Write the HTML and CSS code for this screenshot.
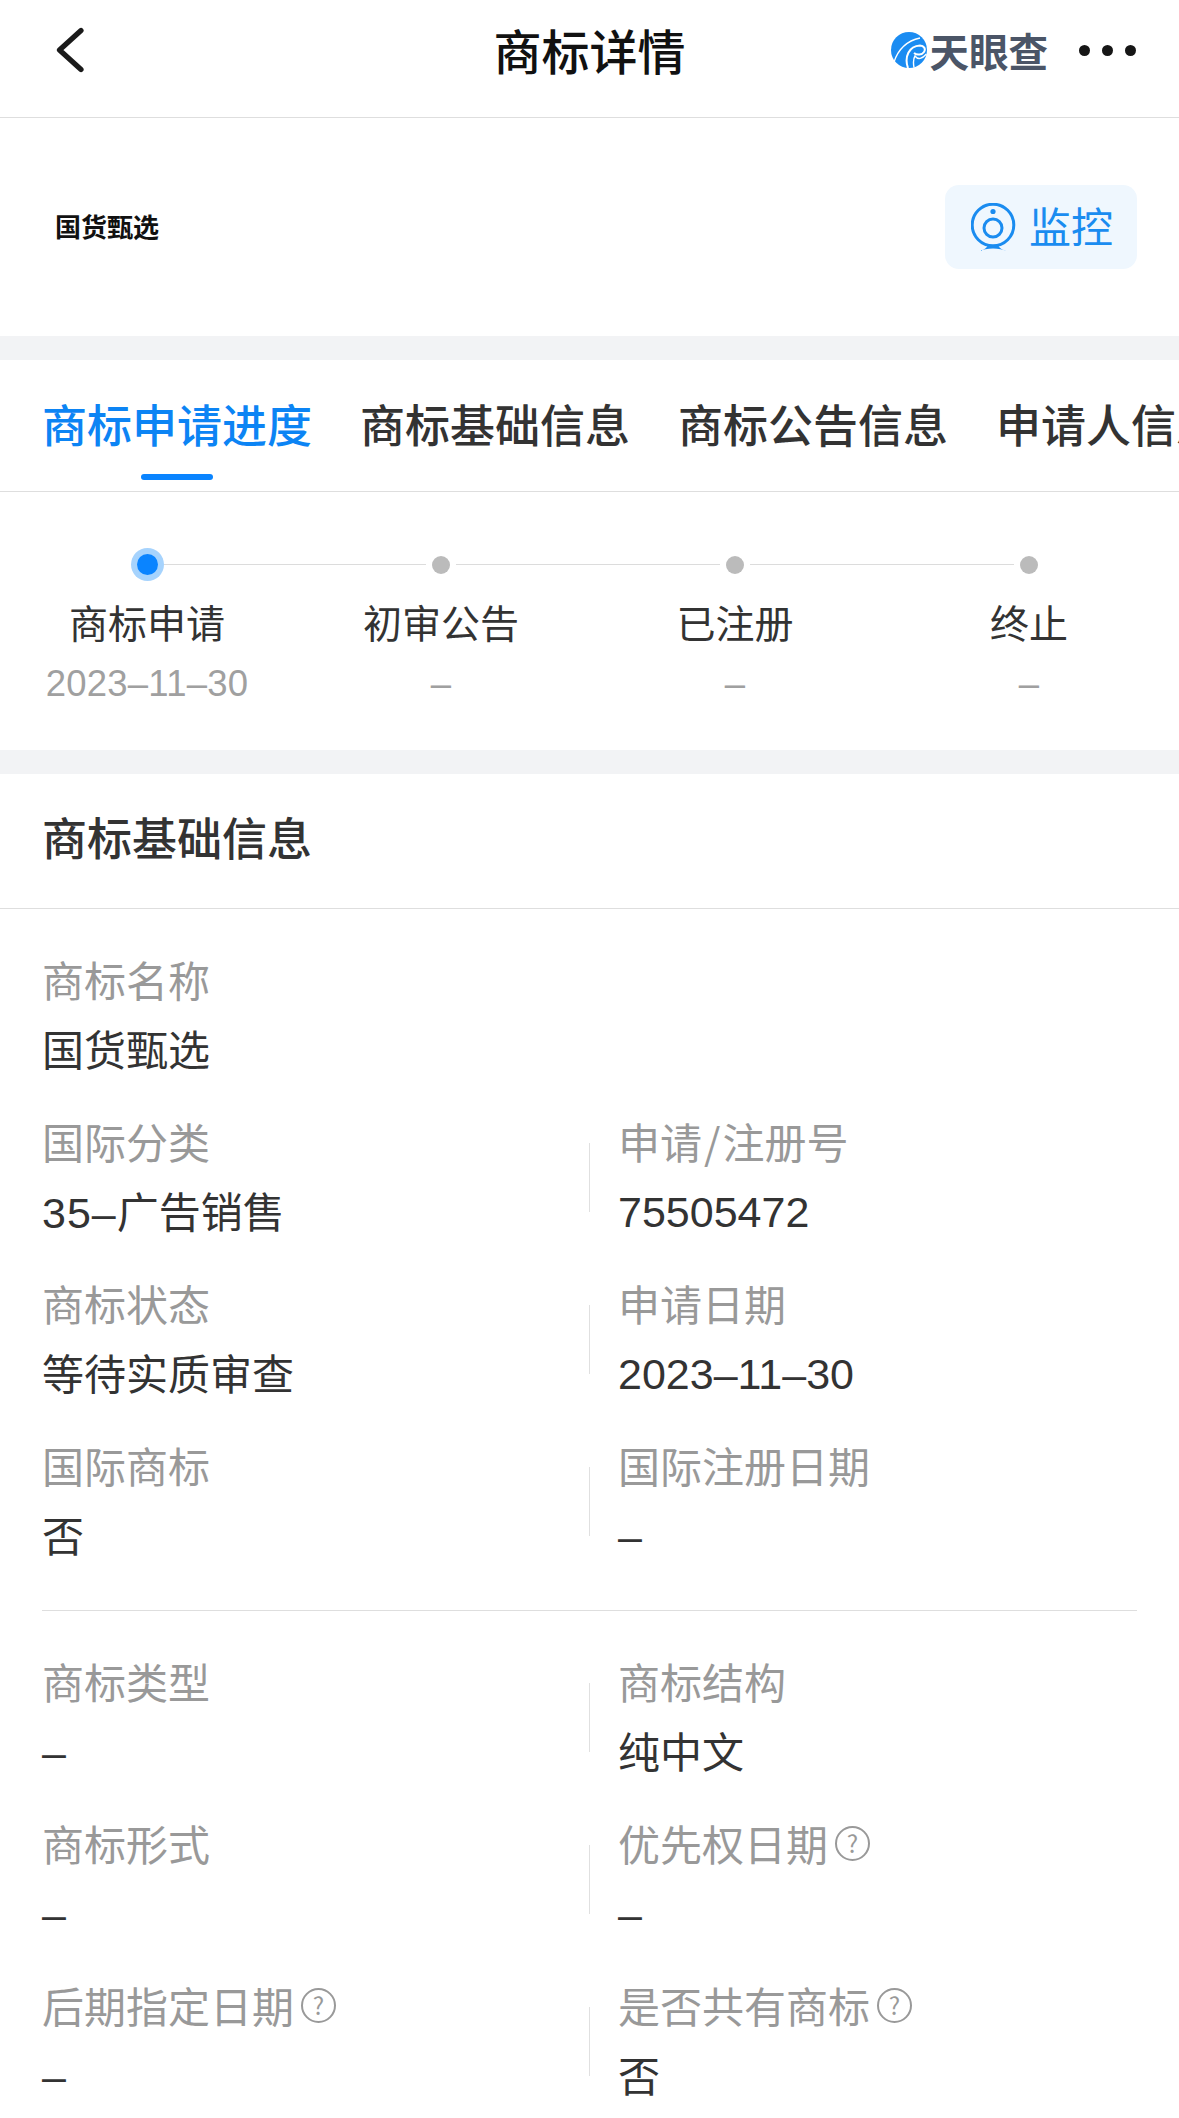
FILE: index.html
```html
<!DOCTYPE html>
<html lang="zh-CN">
  <head>
    <meta charset="UTF-8" />
    <meta name="viewport" content="width=device-width, initial-scale=1.0" />
    <title>商标详情</title>
    <link rel="stylesheet" href="styles.css">
  </head>
  <body>
    <header class="nav">
      <div class="nav-left">
        <svg class="back" width="28" height="46" viewBox="0 0 28 46"><path d="M25 3.5 L3.5 23 L25 42.5" fill="none" stroke="#1a1a1a" stroke-width="5.2" stroke-linecap="round" stroke-linejoin="round"/></svg>
      </div>
      <h1 class="nav-title">商标详情</h1>
      <div class="nav-right">
        <div class="logo">
          <svg width="36" height="36" viewBox="0 0 36 36">
            <circle cx="18" cy="18" r="18" fill="#1b8cf2"/>
            <path d="M3 30 C7 18 15 9 29 6" fill="none" stroke="#fff" stroke-width="1.3"/>
            <path d="M17 36 C13 25 18 14 29 13.5 C33 13.5 35 17 33 20 C31 23 26 23.5 23 21" fill="none" stroke="#fff" stroke-width="2"/>
            <path d="M23 35.5 C22 30 22 27 24 24 C27 28 31 27 35.5 22" fill="none" stroke="#fff" stroke-width="1.4"/>
          </svg>
          <span class="logo-text">天眼查</span>
        </div>
        <div class="more"><i></i><i></i><i></i></div>
      </div>
    </header>

    <section class="brand">
      <span class="brand-name">国货甄选</span>
      <div class="monitor">
        <svg width="45" height="48" viewBox="0 0 45 48">
          <circle cx="22" cy="22" r="20.8" fill="none" stroke="#1a8cf0" stroke-width="3"/>
          <circle cx="22" cy="25" r="9" fill="none" stroke="#1a8cf0" stroke-width="3"/>
          <circle cx="22" cy="8.5" r="2.6" fill="#1a8cf0"/>
          <path d="M8 48 C13 47 16 45 17 42 L27 42 C28 45 31 47 36 48 C29 44.5 15 44.5 8 48 Z" fill="#1a8cf0"/>
        </svg>
        <span class="monitor-text">监控</span>
      </div>
    </section>

    <div class="band"></div>

    <nav class="tabs">
      <span class="tab active">商标申请进度</span>
      <span class="tab">商标基础信息</span>
      <span class="tab">商标公告信息</span>
      <span class="tab">申请人信息</span>
    </nav>

    <section class="steps">
      <div class="step">
        <div class="track"><span class="seg none"></span><span class="dot on"></span><span class="seg"></span></div>
        <div class="step-name">商标申请</div>
        <div class="step-date">2023–11–30</div>
      </div>
      <div class="step">
        <div class="track"><span class="seg"></span><span class="dot"></span><span class="seg"></span></div>
        <div class="step-name">初审公告</div>
        <div class="step-date">–</div>
      </div>
      <div class="step">
        <div class="track"><span class="seg"></span><span class="dot"></span><span class="seg"></span></div>
        <div class="step-name">已注册</div>
        <div class="step-date">–</div>
      </div>
      <div class="step">
        <div class="track"><span class="seg"></span><span class="dot"></span><span class="seg none"></span></div>
        <div class="step-name">终止</div>
        <div class="step-date">–</div>
      </div>
    </section>

    <div class="band"></div>

    <h2 class="section-title">商标基础信息</h2>

    <section class="group divided">
      <div class="field wide">
        <div class="label">商标名称</div>
        <div class="value">国货甄选</div>
      </div>
      <div class="field">
        <div class="label">国际分类</div>
        <div class="value"><span class="num mixed">35–</span>广告销售</div>
      </div>
      <div class="field right">
        <div class="label">申请<span class="slash">/</span>注册号</div>
        <div class="value num">75505472</div>
      </div>
      <div class="field">
        <div class="label">商标状态</div>
        <div class="value">等待实质审查</div>
      </div>
      <div class="field right">
        <div class="label">申请日期</div>
        <div class="value num">2023–11–30</div>
      </div>
      <div class="field">
        <div class="label">国际商标</div>
        <div class="value">否</div>
      </div>
      <div class="field right">
        <div class="label">国际注册日期</div>
        <div class="value num">–</div>
      </div>
    </section>

    <section class="group">
      <div class="field">
        <div class="label">商标类型</div>
        <div class="value num">–</div>
      </div>
      <div class="field right">
        <div class="label">商标结构</div>
        <div class="value">纯中文</div>
      </div>
      <div class="field">
        <div class="label">商标形式</div>
        <div class="value num">–</div>
      </div>
      <div class="field right">
        <div class="label">优先权日期<span class="help">?</span></div>
        <div class="value num">–</div>
      </div>
      <div class="field">
        <div class="label">后期指定日期<span class="help">?</span></div>
        <div class="value num">–</div>
      </div>
      <div class="field right">
        <div class="label">是否共有商标<span class="help">?</span></div>
        <div class="value">否</div>
      </div>
    </section>
  </body>
</html>
```

FILE: styles.css
```css
* {
  box-sizing: border-box;
}
body {
  margin: 0;
  height: 2118px;
  overflow: hidden;
  background-color: #fff;
  color: #333;
  font-family: "Noto Sans CJK SC", "Noto Sans", sans-serif;
}
.nav {
  display: grid;
  grid-template-columns: 1fr auto 1fr;
  align-items: center;
  height: 118px;
  padding: 0 43px 17px;
  border-bottom: 1px solid #dedede;
}
.back {
  display: block;
  margin-left: 13px;
}
.nav-title {
  margin: 0;
  padding-bottom: 2px;
  font-size: 48px;
  font-weight: 500;
  color: #111;
  line-height: 60px;
}
.nav-right {
  display: flex;
  justify-content: flex-end;
  align-items: center;
  gap: 31px;
}
.logo {
  display: flex;
  align-items: center;
  gap: 3px;
}
.logo-text {
  font-size: 39.5px;
  font-weight: 700;
  line-height: 44px;
  color: #4b5567;
}
.more {
  display: flex;
  gap: 12px;
}
.more i {
  width: 11px;
  height: 11px;
  border-radius: 50%;
  background-color: #161616;
}
.brand {
  display: flex;
  justify-content: space-between;
  align-items: center;
  height: 218px;
  padding: 0 42px 0 55px;
}
.brand-name {
  padding-bottom: 4px;
  font-size: 26px;
  font-weight: 700;
  color: #111;
}
.monitor {
  display: flex;
  align-items: center;
  gap: 13px;
  width: 192px;
  height: 84px;
  padding-left: 26px;
  border-radius: 14px;
  background-color: #eff7fe;
  font-size: 42px;
  color: #1a8cf0;
}
.monitor-text {
  padding-bottom: 5px;
}
.band {
  height: 24px;
  background-color: #f2f3f5;
}
.tabs {
  display: flex;
  gap: 48px;
  height: 132px;
  padding-left: 42px;
  overflow: hidden;
  border-bottom: 1px solid #dedede;
}
.tab {
  position: relative;
  flex-shrink: 0;
  font-size: 45px;
  font-weight: 500;
  line-height: 128px;
  color: #333;
}
.tab.active {
  color: #0c84f4;
}
.tab.active::after {
  content: "";
  position: absolute;
  left: 99px;
  bottom: 11px;
  width: 72px;
  height: 6px;
  border-radius: 3px;
  background-color: #0a84ff;
}
.steps {
  display: grid;
  grid-template-columns: repeat(4, 294px);
  height: 258px;
  padding-top: 56px;
}
.step {
  text-align: center;
}
.track {
  display: flex;
  align-items: center;
  height: 33px;
}
.seg {
  flex: 1;
  height: 1px;
  background-color: #dcdcdc;
}
.seg.none {
  background-color: transparent;
}
.dot {
  width: 18px;
  height: 18px;
  margin: 0 6px;
  border-radius: 50%;
  background-color: #bbb;
}
.dot.on {
  width: 21px;
  height: 21px;
  background-color: #0a84ff;
  box-shadow: 0 0 0 6px #a6d3fd;
}
.step-name {
  margin-top: 12px;
  font-size: 39px;
  line-height: 56px;
  color: #333;
}
.step-date {
  margin-top: 5px;
  font-family: "Liberation Sans", sans-serif;
  font-size: 36.5px;
  line-height: 60px;
  letter-spacing: 0.2px;
  color: #a0a0a0;
}
.section-title {
  margin: 0;
  height: 135px;
  padding-left: 42px;
  font-size: 45px;
  font-weight: 500;
  line-height: 126px;
  color: #333;
  border-bottom: 1px solid #dedede;
}
.group {
  display: grid;
  grid-template-columns: 547px 1fr;
  grid-auto-rows: 136px;
  row-gap: 26px;
  margin: 0 42px;
  padding-top: 36px;
}
.group.divided {
  padding-bottom: 43px;
  border-bottom: 1px solid #dedede;
}
.field {
  position: relative;
}
.field.wide {
  grid-column: 1 / -1;
}
.field.right {
  padding-left: 29px;
}
.field.right::before {
  content: "";
  position: absolute;
  left: 0;
  top: 36px;
  width: 1px;
  height: 69px;
  background-color: #e0e0e0;
}
.label {
  display: flex;
  align-items: center;
  font-size: 42px;
  line-height: 68px;
  color: #999;
}
.slash {
  margin: 0 2px;
}
.value {
  padding-top: 1px;
  font-size: 42px;
  line-height: 68px;
  color: #333;
}
.num {
  font-family: "Liberation Sans", sans-serif;
  font-size: 43px;
}
.value.num {
  padding-top: 3px;
}
.num.mixed {
  letter-spacing: 1px;
}
.help {
  display: flex;
  justify-content: center;
  align-items: center;
  width: 35px;
  height: 35px;
  margin-left: 7px;
  border: 2.5px solid #999;
  border-radius: 50%;
  font-size: 24px;
  line-height: 30px;
  color: #999;
}
```
